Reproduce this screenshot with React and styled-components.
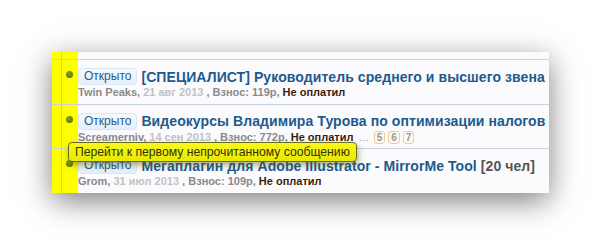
import React from "react";
import styled, { createGlobalStyle } from "styled-components";

const Global = createGlobalStyle`
  body {
    margin: 0;
    background: #ffffff;
    font-family: "Liberation Sans", Arial, sans-serif;
  }
`;

const Page = styled.div`
  width: 601px;
  height: 245px;
  padding: 52px 0 0 52px;
  box-sizing: border-box;
  overflow: hidden;
`;

const Panel = styled.div`
  position: relative;
  width: 497px;
  height: 141px;
  background: #fbfbfd;
  box-shadow: 0 8px 28px rgba(0, 0, 0, 0.5);
  padding-top: 7px;
  box-sizing: border-box;
  display: flex;
  flex-direction: column;
`;

const YellowBar = styled.div`
  position: absolute;
  left: 0;
  top: 0;
  bottom: 0;
  width: 26px;
  background: #ffff00;
`;

const Row = styled.div`
  position: relative;
  height: 45px;
  border-top: 1px solid #c5d3e0;
  display: flex;
  box-sizing: border-box;
`;

const Gutter = styled.div`
  position: relative;
  width: 26px;
  flex: none;
  padding-top: 11px;
  padding-left: 14px;
  box-sizing: border-box;
`;

const VLine = styled.div`
  position: absolute;
  left: 9px;
  top: -8px;
  bottom: 0;
  width: 1px;
  background: #dede00;
`;

const Dot = styled.span`
  display: block;
  width: 7px;
  height: 7px;
  border-radius: 50%;
  background: radial-gradient(circle at 40% 35%, #8aa020, #4f6a00);
`;

const Body = styled.div`
  flex: 1;
  min-width: 0;
  overflow: hidden;
  padding-top: 8px;
`;

const TitleLine = styled.div`
  display: flex;
  align-items: center;
  white-space: nowrap;
  height: 17px;
`;

const Badge = styled.span`
  flex: none;
  display: inline-block;
  font-size: 12px;
  color: #2b5b88;
  background: linear-gradient(#f4f9fe, #e4effa);
  border: 1px solid #d9e6f3;
  border-radius: 4px;
  padding: 1px 5px;
  margin-right: 4px;
  line-height: 13px;
`;

const Title = styled.span`
  font-weight: bold;
  font-size: 14px;
  color: #1d5a8e;
  letter-spacing: 0.08px;
`;

const Extra = styled.span`
  color: #555555;
`;

const Meta = styled.div`
  margin-top: 1px;
  font-size: 11px;
  font-weight: bold;
  color: #8a8a8a;
  white-space: nowrap;
  display: flex;
  align-items: center;
`;

const Date = styled.span`
  color: #c2c2c2;
  margin: 0 3px;
`;

const Status = styled.span`
  color: #3c1d0c;
  margin-left: 3px;
`;

const Dots = styled.span`
  color: #aaaaaa;
  font-weight: normal;
  margin: 0 5px 0 6px;
`;

const PageNum = styled.span`
  display: inline-block;
  font-size: 10px;
  color: #999999;
  border: 1px solid #f1cc9a;
  background: #fff8ee;
  border-radius: 3px;
  padding: 0 2px;
  margin-right: 3px;
  line-height: 11px;
`;

const Tooltip = styled.div`
  position: absolute;
  left: 16px;
  top: 90px;
  padding: 1px 6px 0 6px;
  height: 17px;
  line-height: 16px;
  font-size: 12.2px;
  color: #333300;
  background: linear-gradient(#f8f820, #e8e800);
  border: 1px solid #6c6c20;
  border-radius: 4px;
  box-shadow: 1px 3px 6px rgba(80, 80, 0, 0.5);
  white-space: nowrap;
`;

const topics = [
  {
    title: "[СПЕЦИАЛИСТ] Руководитель среднего и высшего звена",
    author: "Twin Peaks",
    date: "21 авг 2013",
    fee: "119р",
  },
  {
    title: "Видеокурсы Владимира Турова по оптимизации налогов",
    author: "Screamerniv",
    date: "14 сен 2013",
    fee: "772р",
    pages: ["5", "6", "7"],
  },
  {
    title: "Мегаплагин для Adobe Illustrator - MirrorMe Tool",
    extra: "[20 чел]",
    author: "Grom",
    date: "31 июл 2013",
    fee: "109р",
  },
];

export default function App() {
  return (
    <Page>
      <Global />
      <Panel>
        <YellowBar />
        {topics.map((t) => (
          <Row key={t.title}>
            <Gutter>
              <VLine />
              <Dot />
            </Gutter>
            <Body>
              <TitleLine>
                <Badge>Открыто</Badge>
                <Title>
                  {t.title}
                  {t.extra && <Extra> {t.extra}</Extra>}
                </Title>
              </TitleLine>
              <Meta>
                {t.author},<Date>{t.date}</Date>, Взнос: {t.fee},
                <Status>Не оплатил</Status>
                {t.pages && (
                  <>
                    <Dots>...</Dots>
                    {t.pages.map((p) => (
                      <PageNum key={p}>{p}</PageNum>
                    ))}
                  </>
                )}
              </Meta>
            </Body>
          </Row>
        ))}
        <Tooltip>Перейти к первому непрочитанному сообщению</Tooltip>
      </Panel>
    </Page>
  );
}
